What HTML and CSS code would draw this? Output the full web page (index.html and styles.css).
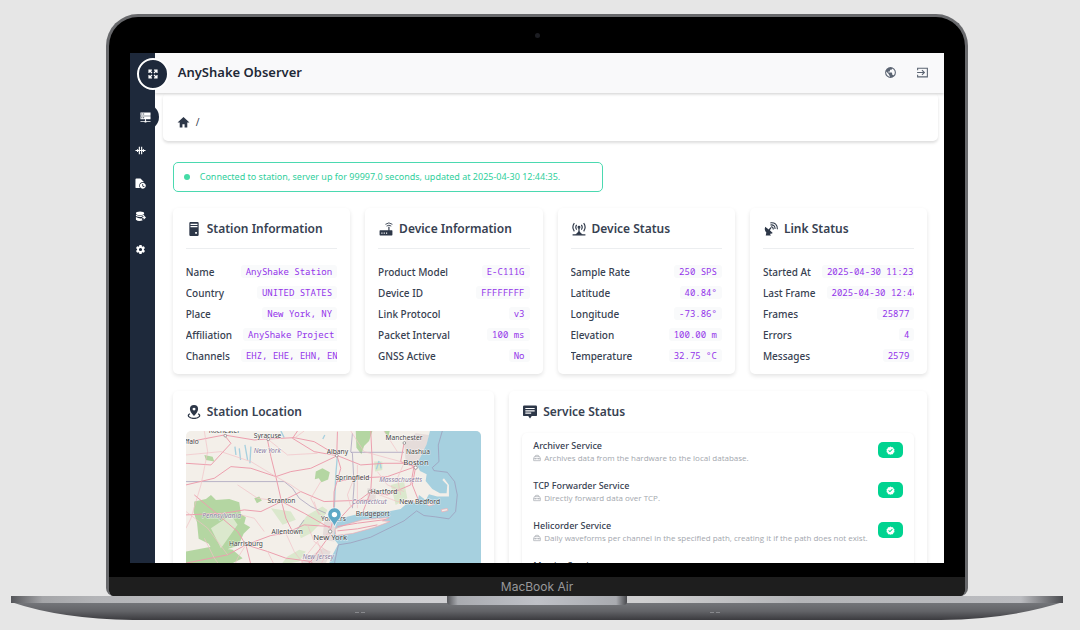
FILE: index.html
```html
<!DOCTYPE html>
<html lang="en">
<head>
<meta charset="utf-8">
<meta name="viewport" content="width=device-width, initial-scale=1">
<title>AnyShake Observer</title>
<link rel="stylesheet" href="styles.css">
</head>
<body>
<svg class="sprite" aria-hidden="true">
  <symbol id="check" viewBox="0 0 24 24"><path fill-rule="evenodd" d="M12 1l3 2.200 3.700.1 1.200 3.500 2.900 2.200L21.700 12.500l1.100 3.500-3 2.200-1.200 3.500-3.600.100L12 23l-3-1.200-3.600-.1-1.200-3.500-3-2.200 1.100-3.500L1.200 9l3-2.200L5.300 3.300 9 3.200zM10.500 16.800l7.500-7.500-1.800-1.800-5.700 5.700-2.600-2.600-1.800 1.800z"/></symbol>
  <symbol id="case" viewBox="0 0 24 24"><path fill="none" stroke="currentColor" stroke-width="2" d="M7 8V6q0-2 2-2h6q2 0 2 2v2M4 8h16l2 5v7H2v-7zM2 14h20M7 12v4M17 12v4"/></symbol>
</svg>
<div class="laptop">
  <div class="lid">
    <div class="bezel"><span class="camera"></span></div>
    <div class="screen">
      <nav class="sidebar" aria-label="Main">
        <button class="expand" type="button" aria-label="Expand menu">
          <svg class="line" viewBox="0 0 24 24" stroke-width="3"><path d="M2.500 9.500v-7h7M14.500 2.500h7v7M21.500 14.500v7h-7M9.500 21.500h-7v-7M3 3l6.500 6.500M21 3l-6.500 6.500M21 21l-6.500-6.500M3 21l6.500-6.500"/></svg>
        </button>
        <a class="item active" href="#home" aria-label="Home"><svg viewBox="0 0 24 24"><path fill-rule="evenodd" d="M1 1h22v7H1zM3 3.500v2h2v-2zM7 3.500v2h2v-2zM1 9h22v7H1zM3 11.500v2h2v-2zM7 11.500v2h2v-2zM11 16h2v3h1v1h9v2h-9v1h-4v-1H1v-2h9v-1h1z"/></svg></a>
        <a class="item" href="#realtime" aria-label="Realtime"><svg class="line" viewBox="0 0 24 24" stroke-width="2.500"><path d="M1 12h22M5.500 9v6M9.500 4v16M14.500 4v16M18.500 9v6"/></svg></a>
        <a class="item" href="#history" aria-label="History"><svg viewBox="0 0 24 24"><path d="M3 1h9l7 7v1a8 8 0 0 0-8 13H3q-2 0-2-2V3q0-2 2-2z"/><path fill-rule="evenodd" d="M17 10.500a6.500 6.500 0 1 1-.1 0zM16 13v5l4 2 1-1.500-3.200-1.700V13z"/></svg></a>
        <a class="item" href="#export" aria-label="Export"><svg viewBox="0 0 24 24"><ellipse cx="11" cy="5" rx="9" ry="4"/><path d="M2 8q9 5 18 0v3h-5v2q-8 1-13-2zM2 13q6 4 13 3v2l2 2q-9 4-15-1zM16 12h3V9l5 5-5 5v-3h-3z"/></svg></a>
        <a class="item" href="#settings" aria-label="Settings"><svg viewBox="0 0 24 24"><path d="M12,15.500A3.500,3.500 0 0,1 8.500,12A3.500,3.500 0 0,1 12,8.500A3.500,3.500 0 0,1 15.500,12A3.500,3.500 0 0,1 12,15.500M19.430,12.970C19.470,12.650 19.500,12.330 19.500,12C19.500,11.670 19.470,11.340 19.430,11L21.540,9.370C21.730,9.220 21.780,8.950 21.660,8.730L19.660,5.270C19.540,5.050 19.270,4.960 19.050,5.050L16.560,6.050C16.040,5.660 15.500,5.320 14.870,5.070L14.500,2.420C14.460,2.180 14.250,2 14,2H10C9.750,2 9.540,2.180 9.500,2.420L9.130,5.070C8.500,5.320 7.960,5.660 7.440,6.050L4.950,5.050C4.730,4.960 4.460,5.050 4.340,5.270L2.340,8.730C2.210,8.950 2.270,9.220 2.460,9.370L4.570,11C4.530,11.340 4.500,11.670 4.500,12C4.500,12.330 4.530,12.650 4.570,12.970L2.460,14.630C2.270,14.780 2.210,15.050 2.340,15.270L4.340,18.730C4.460,18.950 4.730,19.030 4.950,18.950L7.440,17.940C7.960,18.340 8.500,18.680 9.130,18.930L9.500,21.580C9.540,21.820 9.750,22 10,22H14C14.250,22 14.460,21.820 14.500,21.580L14.870,18.930C15.500,18.670 16.040,18.340 16.560,17.940L19.050,18.950C19.270,19.030 19.540,18.950 19.660,18.730L21.660,15.270C21.780,15.050 21.730,14.780 21.540,14.630L19.430,12.970Z"/></svg></a>
      </nav>
      <div class="app">
        <header class="topbar">
          <h1>AnyShake Observer</h1>
          <button type="button" aria-label="Language"><svg viewBox="0 0 24 24"><path d="M17.900,17.390C17.640,16.590 16.890,16 16,16H15V13A1,1 0 0,0 14,12H8V10H10A1,1 0 0,0 11,9V7H13A2,2 0 0,0 15,5V4.590C17.930,5.770 20,8.640 20,12C20,14.080 19.200,15.970 17.900,17.390M11,19.930C7.050,19.440 4,16.080 4,12C4,11.380 4.080,10.780 4.210,10.210L9,15V16A2,2 0 0,0 11,18M12,2A10,10 0 0,0 2,12A10,10 0 0,0 12,22A10,10 0 0,0 22,12A10,10 0 0,0 12,2Z"/></svg></button>
          <button type="button" aria-label="Sign out"><svg class="line" viewBox="0 0 24 24" stroke-width="2"><path d="M3 8V4h18v16H3v-4M2 12h13M11 7.500l4.500 4.500-4.500 4.500"/></svg></button>
        </header>
        <nav class="crumbs" aria-label="Breadcrumb">
          <a href="#home" aria-label="Home"><svg viewBox="0 0 24 24"><path d="M10 21v-6h4v6h5v-9h4L12 2 1 12h4v9z"/></svg></a><span>/</span>
        </nav>
        <main class="content">
          <p class="alert" role="status"><span class="dot"></span>Connected to station, server up for 99997.0 seconds, updated at 2025-04-30 12:44:35.</p>
          <div class="stats">
            <section class="card">
              <h2><svg viewBox="0 0 24 24"><path fill-rule="evenodd" d="M6 0h12q2 0 2 2v20q0 2-2 2H6q-2 0-2-2V2q0-2 2-2zM6 3v2h12V3zM6 7v2h12V7zM14 17v3h3v-3z"/></svg>Station Information</h2>
              <dl>
                <div><dt>Name</dt><dd>AnyShake Station</dd></div>
                <div><dt>Country</dt><dd>UNITED STATES</dd></div>
                <div><dt>Place</dt><dd>New York, NY</dd></div>
                <div><dt>Affiliation</dt><dd>AnyShake Project</dd></div>
                <div><dt>Channels</dt><dd>EHZ, EHE, EHN, EN</dd></div>
              </dl>
            </section>
            <section class="card">
              <h2><svg viewBox="0 0 24 24"><path fill-rule="evenodd" d="M2 14h14V8h2v6h4q1 0 1 1v7q0 1-1 1H2q-1 0-1-1v-7q0-1 1-1zM4 18v2h2v-2zM8 18v2h2v-2zM12 18v2h2v-2z"/><path fill="none" stroke="currentColor" stroke-width="1.500" d="M11 4q6-5 12 0M13 7q4-3 8 0"/></svg>Device Information</h2>
              <dl>
                <div><dt>Product Model</dt><dd>E-C111G</dd></div>
                <div><dt>Device ID</dt><dd>FFFFFFFF</dd></div>
                <div><dt>Link Protocol</dt><dd>v3</dd></div>
                <div><dt>Packet Interval</dt><dd>100 ms</dd></div>
                <div><dt>GNSS Active</dt><dd>No</dd></div>
              </dl>
            </section>
            <section class="card">
              <h2><svg class="line" viewBox="0 0 24 24" stroke-width="2"><path d="M4 2q-5 7 0 14M20 2q5 7 0 14M8 5q-3 4 0 8M16 5q3 4 0 8M12 9v11M1 22h22"/><circle cx="12" cy="9" r="1.500"/><path fill="currentColor" d="M12 17l4 4H8z"/></svg>Device Status</h2>
              <dl>
                <div><dt>Sample Rate</dt><dd>250 SPS</dd></div>
                <div><dt>Latitude</dt><dd>40.84°</dd></div>
                <div><dt>Longitude</dt><dd>-73.86°</dd></div>
                <div><dt>Elevation</dt><dd>100.00 m</dd></div>
                <div><dt>Temperature</dt><dd>32.75 °C</dd></div>
              </dl>
            </section>
            <section class="card">
              <h2><svg viewBox="0 0 24 24"><path d="M2 8q-2 6 2 10l-1 5h9l-2-3q3 1 5-1l-5-5 3-4-2-1-3 4z"/><path fill="none" stroke="currentColor" stroke-width="1.800" d="M12 8q4 0 4 5M11 5q8-1 8 7M11 1.500q12-1 12 11"/></svg>Link Status</h2>
              <dl>
                <div><dt>Started At</dt><dd>2025-04-30 11:23</dd></div>
                <div><dt>Last Frame</dt><dd>2025-04-30 12:44</dd></div>
                <div><dt>Frames</dt><dd>25877</dd></div>
                <div><dt>Errors</dt><dd>4</dd></div>
                <div><dt>Messages</dt><dd>2579</dd></div>
              </dl>
            </section>
          </div>
          <div class="panels">
            <section class="card">
              <h2><svg viewBox="0 0 24 24"><path fill-rule="evenodd" d="M12 0a7 7 0 0 1 7 7q0 5-7 12Q5 12 5 7a7 7 0 0 1 7-7zM12 4.500a2.500 2.500 0 1 0 .1 0z"/><path fill="none" stroke="currentColor" stroke-width="2.200" d="M5 15q-4 2-2 5 3 3 9 3t9-3q2-3-2-5"/></svg>Station Location</h2>
              <svg class="map" viewBox="45 138 888 600" role="img" aria-label="Map around New York">
                <rect class="land" x="45" y="138" width="888" height="600"/>
                <g class="wood">
                  <path d="M70 350l35-8 15-12 15 15 40-3 30 10 5 35 15 10-5 20 18 10-20 20-15 35-30 10-20 15-25-5-15-25-30-15-5-50-10-30zM435 260l20-10 22 12-5 22-20 8-8-12-12 3zM555 138h50l-10 30-15 15-8 25-15-20zM45 500l80-15 60 10 30 25-60 30H45zM640 138l12 22 5-22zM250 340l15-5 8 12-15 8zM100 210l25 5 5 15-25-5z"/>
                  <path class="pale" d="M380 430l30-40 45-25 15 10-20 40-30 30-30 15zM330 540l20-25 35-20 20 5-20 30zM660 300l40-10 10 50-35 20zM610 230l25 0 0 25-22 5zM300 370l60 10 15 25-40 15zM120 430l60-40 20 30-50 70z"/>
                </g>
                <g class="urban">
                  <path d="M700 170l35-25 40 5-15 70-20 30-35-20zM460 410l30-5 20 25-20 40-35-5zM590 310l25 0 0 40-25 0zM395 530l60-40 25 10-25 60h-60z"/>
                </g>
                <path class="sea" d="M778 138L768 178 750 215 738 238 748 258 768 268 765 288 785 312 808 325 828 325 830 300 815 285 820 280 835 300 835 335 800 335 775 328 765 345 745 330 740 355 715 350 690 372 660 378 600 380 550 390 520 398 498 412 492 435 488 460 502 478 480 520 466 570 455 738H933V138z"/>
                <path class="land shore" d="M493 432L530 418 575 405 610 402 655 398 635 408 658 410 610 428 545 446 495 452zM765 355l20-4 5 8-15 4zM812 374l18-3 2 6-18 4z"/>
                <path class="lake" d="M205 190l4 35M222 180l8 45M240 185l-3 50M192 185l3 25M462 150l-6 12M625 228l-8 25M628 232l3 18M500 210l-5 60-4 90-2 60M330 138l10 20"/>
                <path class="border" d="M45 290H340L365 310 385 340 420 365 465 385M545 145L540 200 545 205 550 300 545 370M540 202H700M375 440l25-35M815 138L803 180 805 230 785 248 790 257 830 262 852 290 860 330 855 380 835 402 795 396 760 392 738 378 700 408 600 457 540 474 503 480 492 530 485 738"/>
                <g class="roads">
                  <path d="M45 172L160 150 250 165 290 162 370 158 430 170 500 212 570 240 640 235 700 235 735 245M290 165L300 215 315 275 332 350 345 400 365 440M500 140L498 210 510 250 490 320 488 400 478 440M500 212L420 250 360 260 315 275 240 250 180 245 130 280 45 300M332 350L270 380 220 375 160 385 45 390M332 350L400 385 478 430M345 445L300 452 225 480 170 510 45 535M345 445L400 420 478 425M225 480L290 500 345 520 420 530 478 450M700 175L690 230 730 245 720 300 650 330 600 320 540 365 490 420M600 138L605 240 600 320 575 385M735 245L725 300 745 350M735 245L650 275 550 280 500 290M225 480L240 540 300 590M70 330L130 380 200 440 225 480M332 350L390 320 460 350 600 345M45 235L120 240 180 175 160 150M380 138L365 160 430 200 498 212M500 425L560 415 645 404M500 438L560 432 620 420M440 738L450 560 420 530M420 530L380 560 300 570"/>
                  <path class="faint" d="M45 210L150 200 240 230 315 275M100 138L110 200 90 300 60 400 45 430M290 162L350 210 440 205M200 300L260 340 332 350M370 160L400 138M450 290L420 340 445 390M540 138L580 200 690 230M600 320L680 350 740 350M640 138L680 200M480 440L440 470 400 520 380 560M345 445L370 500 400 540M280 440L250 400 210 390M100 460L130 520 160 560M225 480L200 520 180 570M290 500L320 560M440 470L460 520 430 580M470 410L440 380 430 350M550 280L530 330 540 365M620 260L650 300 700 320M700 235L680 280 690 330M45 380L110 430 170 510M410 420L430 470 470 500M560 240L560 370M390 320L360 300 315 275"/>
                </g>
                <g class="towns"><circle cx="163" cy="152" r="4"/><circle cx="292" cy="163" r="4"/><circle cx="498" cy="212" r="4"/><circle cx="735" cy="248" r="5"/><circle cx="701" cy="174" r="4"/><circle cx="478" cy="440" r="5"/><circle cx="597" cy="320" r="4"/></g>
                <g class="places">
                  <text x="160" y="145">Rochester</text><text x="62" y="178">ffalo</text><text x="290" y="159">Syracuse</text><text x="500" y="207">Albany</text><text x="700" y="165">Manchester</text><text x="742" y="207">Nashua</text><text class="city" x="736" y="239">Boston</text><text x="545" y="286">Springfield</text><text x="640" y="327">Hartford</text><text x="747" y="357">New Bedford</text><text x="332" y="353">Scranton</text><text x="606" y="394">Bridgeport</text><text x="488" y="409">Yonkers</text><text x="349" y="446">Allentown</text><text class="city" x="478" y="467">New York</text><text x="225" y="485">Harrisburg</text>
                </g>
                <g class="states"><text x="289" y="204">New York</text><text x="690" y="292">Massachusetts</text><text x="596" y="357">Connecticut</text><text x="152" y="399">Pennsylvania</text><text x="442" y="522">New Jersey</text></g>
                <path class="pin" d="M491 425Q486 412 476 402A20 20 0 1 1 506 402Q496 412 491 425z"/><circle cx="491" cy="389" r="8" fill="#fff"/>
              </svg>
            </section>
            <section class="card">
              <h2><svg viewBox="0 0 24 24"><path fill-rule="evenodd" d="M2 1h20q2 0 2 2v14q0 2-2 2h-7l-3 4-3-4H2q-2 0-2-2V3q0-2 2-2zM4 5v2h16V5zM4 9v2h16V9zM4 13v2h10v-2z"/></svg>Service Status</h2>
              <ul class="services">
                <li><div><h3>Archiver Service</h3><p><svg><use href="#case"/></svg>Archives data from the hardware to the local database.</p></div><span class="badge"><svg><use href="#check"/></svg></span></li>
                <li><div><h3>TCP Forwarder Service</h3><p><svg><use href="#case"/></svg>Directly forward data over TCP.</p></div><span class="badge"><svg><use href="#check"/></svg></span></li>
                <li><div><h3>Helicorder Service</h3><p><svg><use href="#case"/></svg>Daily waveforms per channel in the specified path, creating it if the path does not exist.</p></div><span class="badge"><svg><use href="#check"/></svg></span></li>
                <li><div><h3>Metrics Service</h3></div></li>
              </ul>
            </section>
          </div>
        </main>
      </div>
    </div>
    <div class="chin">MacBook Air</div>
  </div>
  <svg class="base" viewBox="0 0 1052 24" preserveAspectRatio="none" aria-hidden="true">
    <defs>
      <linearGradient id="under" x2="0" y2="1"><stop offset="0" stop-color="#75777b"/><stop offset=".5" stop-color="#636468"/><stop offset="1" stop-color="#3b3b3f"/></linearGradient>
      <linearGradient id="edge"><stop offset="0" stop-color="#55565a"/><stop offset=".03" stop-color="#a4a5a8"/><stop offset=".08" stop-color="#b3b4b7"/><stop offset=".4" stop-color="#cfcfd2"/><stop offset=".6" stop-color="#cfcfd0"/><stop offset=".75" stop-color="#b4b5b8"/><stop offset=".96" stop-color="#bbbcc0"/><stop offset="1" stop-color="#4b4c50"/></linearGradient>
      <linearGradient id="notch"><stop offset="0" stop-color="#55565a"/><stop offset=".06" stop-color="#a9abb0"/><stop offset=".5" stop-color="#bfc1c7"/><stop offset=".94" stop-color="#a9abb0"/><stop offset="1" stop-color="#48494d"/></linearGradient>
    </defs>
    <path fill="url(#under)" d="M0 6H1052Q1000 23 930 24H122Q50 23 0 6z"/>
    <path fill="url(#edge)" d="M0 0H1052V7H0z"/>
    <path fill="url(#notch)" d="M436 0H616V6Q616 9 612 9H440Q436 9 436 6z"/>
    <path fill="#88898d" d="M344 16h4v1h-4zM350 16h4v1h-4zM699 16h4v1h-4zM705 16h4v1h-4z"/>
  </svg>
</div>
</body>
</html>
```

FILE: styles.css
```css
* { box-sizing: border-box; margin: 0; padding: 0; }
body {
  background: #e6e6e6;
  color: #374151;
  font-family: "Noto Sans", "Open Sans", sans-serif;
}
svg { fill: currentColor; flex: none; display: block; }
.line { fill: none; stroke: currentColor; }
button { border: 0; background: none; color: inherit; cursor: pointer; }
a { color: inherit; text-decoration: none; }
ul { list-style: none; }
.sprite { display: none; }

.laptop {
  height: 100vh;
  padding: 14px 17px 10px 11px;
  display: flex;
  flex-direction: column;
  align-items: center;
}
.lid {
  flex: 1;
  min-height: 0;
  width: 82%;
  display: flex;
  flex-direction: column;
  background: #000;
  border: 3px solid #68696c;
  border-bottom: 0;
  border-radius: 32px 32px 8px 8px;
  overflow: hidden;
}
.bezel { height: 36px; flex: none; display: flex; justify-content: center; align-items: center; }
.camera { width: 5px; height: 5px; border-radius: 50%; background: #1c1d22; }
.screen {
  flex: 1;
  min-height: 0;
  margin: 0 21px 14px;
  display: flex;
  overflow: hidden;
  background: #fff;
}
.chin {
  flex: none;
  height: 19px;
  background: #1e1e1e;
  color: #98989a;
  text-align: center;
  font: 12px/19px Inter, "Liberation Sans", sans-serif;
}
.base { width: 100%; height: 24px; }

.sidebar {
  position: relative;
  z-index: 2;
  flex: none;
  width: 25px;
  padding-top: 51px;
  background: #1e293b;
  color: #fff;
  display: flex;
  flex-direction: column;
  gap: 7px;
}
.expand {
  position: absolute;
  left: 7px;
  top: 5px;
  width: 32px;
  height: 32px;
  border: 2px solid #fff;
  border-radius: 50%;
  background: #1e293b;
  display: grid;
  place-items: center;
}
.expand svg { width: 10px; height: 10px; }
.item { height: 26px; padding-left: 5px; display: flex; align-items: center; }
.item svg { width: 11px; height: 11px; }
.active {
  width: 29px;
  padding-left: 10px;
  background: #1e293b;
  border-radius: 0 13px 13px 0;
}

.app { flex: 1; min-width: 0; }
.topbar {
  height: 40px;
  padding: 0 15px 2px 23px;
  display: flex;
  align-items: center;
  gap: 19px;
  background: #f9f9fa;
  color: #5b6472;
  box-shadow: 0 1px 3px #0003;
  position: relative;
}
.topbar h1 { flex: 1; font-size: 13px; line-height: 18px; font-weight: 600; color: #1f2937; }
.topbar svg { width: 13px; height: 13px; }
.crumbs {
  height: 48px;
  margin: 0 6px 0 8px;
  padding: 10px 14px 0;
  display: flex;
  align-items: center;
  gap: 6px;
  font-size: 10px;
  border-radius: 5px;
  box-shadow: 0 2px 3px #0002;
}
.crumbs svg { width: 13px; height: 13px; color: #2d3748; }
.content { padding: 21px 17px 0 18px; }
.alert {
  width: 57%;
  height: 30px;
  padding: 0 10px;
  display: flex;
  align-items: center;
  gap: 10px;
  border: 1px solid #4bd9b0;
  border-radius: 5px;
  color: #2fcf9c;
  font-size: 9px;
  line-height: 12px;
  white-space: nowrap;
}
.dot { width: 6px; height: 6px; border-radius: 50%; background: #45dba6; }

.stats { margin-top: 16px; display: grid; grid-template-columns: repeat(4, minmax(0, 1fr)); gap: 15px; }
.panels { margin-top: 17px; display: grid; grid-template-columns: minmax(0, 10fr) minmax(0, 13fr); gap: 15px; }
.card {
  padding: 12px 13px 8px;
  border-radius: 5px;
  box-shadow: 0 2px 4px #0000001c;
}
.card h2 {
  display: flex;
  align-items: center;
  gap: 6px;
  padding-left: 1px;
  font-size: 12px;
  line-height: 18px;
  font-weight: 600;
}
.card h2 svg { width: 14px; height: 14px; color: #2d3748; }
.stats dl { margin-top: 10px; padding-top: 12px; border-top: 1px solid #eceef0; }
.stats dl div { height: 21px; display: flex; align-items: center; justify-content: space-between; gap: 11px; overflow: hidden; white-space: nowrap; }
.stats dt { font-size: 10px; line-height: 14px; font-weight: 500; }
.stats dd {
  flex: none;
  padding: 0 5px;
  border-radius: 3px;
  background: #f9fafb;
  color: #9333ea;
  font: 9px/13px "Noto Sans Mono", "DejaVu Sans Mono", monospace;
}
.map { width: 100%; height: auto; margin-top: 10px; border-radius: 5px; }
.land { fill: #f3efe9; }
.shore { stroke: #efa9b2; stroke-width: 2; }
.sea { fill: #a6d0df; }
.wood { fill: #b4d6a2; }
.pale { fill: #dbe8cd; }
.urban { fill: #e5dcda; }
.lake { fill: none; stroke: #a6d0df; stroke-width: 4; }
.border { fill: none; stroke: #9c94b5; stroke-width: 2; }
.roads { fill: none; stroke: #ec9fae; stroke-width: 3; stroke-linejoin: round; }
.faint { stroke: #f2bfc6; stroke-width: 2; }
.towns { fill: #fff; stroke: #777; stroke-width: 2; }
.places, .states { font-size: 20px; text-anchor: middle; fill: #444; stroke: #ffffffb0; stroke-width: 3; paint-order: stroke; }
.city { font-size: 23px; }
.states { font-style: italic; fill: #897a9c; }
.pin { fill: #5fa8c6; stroke: #fff; stroke-width: 2; }

.services { margin-top: 12px; padding: 2px 11px; box-shadow: 0 1px 3px #0000001a; border-radius: 5px; }
.services li { height: 40px; display: flex; align-items: flex-start; justify-content: space-between; }
.services h3 { font-size: 9px; line-height: 13px; font-weight: 500; padding-top: 4px; }
.services p { display: flex; align-items: center; gap: 3px; font: 8px/11px "Open Sans", "Noto Sans", sans-serif; color: #a3a7ae; }
.services p svg { width: 8px; height: 8px; }
.badge {
  width: 25px;
  height: 16px;
  margin-top: 7px;
  border-radius: 5px;
  background: #00d390;
  color: #fff;
  display: grid;
  place-items: center;
}
.badge svg { width: 9px; height: 9px; }
```
